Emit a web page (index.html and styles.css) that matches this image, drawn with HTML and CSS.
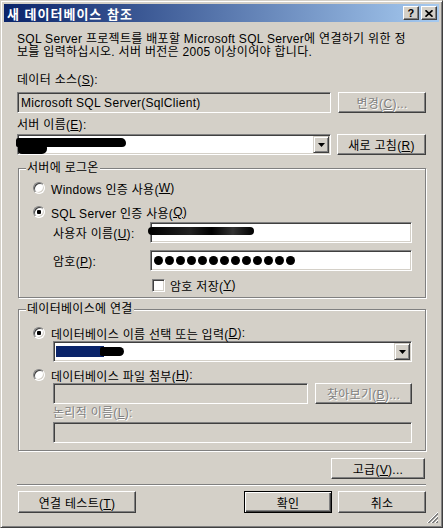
FILE: index.html
```html
<!DOCTYPE html>
<html lang="ko">
<head>
  <meta charset="UTF-8">
  <title>새 데이터베이스 참조</title>
  <link rel="stylesheet" href="styles.css">
</head>
<body>

<div class="window">
  <div class="titlebar">
    <span class="title">새 데이터베이스 참조</span>
    <div class="caption-btns">
      <button class="cap-btn">?</button>
      <button class="cap-btn">
        <svg width="8" height="7" viewBox="0 0 8 7"><path d="M0.5 0.3l7 6.4M7.5 0.3l-7 6.4" stroke="#000" stroke-width="1.7"/></svg>
      </button>
    </div>
  </div>

  <div class="content">
    <p class="desc">SQL Server 프로젝트를 배포할 Microsoft SQL Server에 연결하기 위한 정<br>보를 입력하십시오. 서버 버전은 2005 이상이어야 합니다.</p>

    <div class="label lbl-source">데이터 소스(<u>S</u>):</div>
    <div class="row row-source">
      <div class="field readonly src-field">Microsoft SQL Server(SqlClient)</div>
      <button class="btn disabled btn-change">변경(<u>C</u>)...</button>
    </div>

    <div class="label lbl-server">서버 이름(<u>E</u>):</div>
    <div class="row row-server">
      <div class="combo server-combo">
        <div class="combo-text"><span class="scribble scr-server"></span></div>
        <div class="drop-btn"><svg width="7" height="4" viewBox="0 0 7 4"><path d="M0 0h7L3.5 4z"/></svg></div>
      </div>
      <button class="btn btn-refresh">새로 고침(<u>R</u>)</button>
    </div>

    <fieldset class="group group-logon">
      <legend>서버에 로그온</legend>
      <div class="group-body">
        <div class="opt opt-win"><span class="radio"></span>Windows 인증 사용(<u>W</u>)</div>
        <div class="opt opt-sql"><span class="radio checked"></span>SQL Server 인증 사용(<u>Q</u>)</div>
        <div class="cred-row user-row">
          <span class="cred-label">사용자 이름(<u>U</u>):</span>
          <div class="field cred-field"><span class="scribble scr-user"></span></div>
        </div>
        <div class="cred-row pwd-row">
          <span class="cred-label">암호(<u>P</u>):</span>
          <div class="field cred-field" id="pwd"></div>
        </div>
        <div class="save-row"><span class="checkbox"></span>암호 저장(<u>Y</u>)</div>
      </div>
    </fieldset>

    <fieldset class="group group-db">
      <legend>데이터베이스에 연결</legend>
      <div class="group-body">
        <div class="opt opt-dbname"><span class="radio checked"></span>데이터베이스 이름 선택 또는 입력(<u>D</u>):</div>
        <div class="combo db-combo">
          <div class="combo-text"><span class="selected-text"></span><span class="scribble scr-db"></span></div>
          <div class="drop-btn"><svg width="7" height="4" viewBox="0 0 7 4"><path d="M0 0h7L3.5 4z"/></svg></div>
        </div>
        <div class="opt opt-file"><span class="radio"></span>데이터베이스 파일 첨부(<u>H</u>):</div>
        <div class="file-row">
          <div class="field readonly file-field"></div>
          <button class="btn disabled btn-browse">찾아보기(<u>B</u>)...</button>
        </div>
        <div class="label disabled-text lbl-logical">논리적 이름(<u>L</u>):</div>
        <div class="field readonly logical-field"></div>
      </div>
    </fieldset>

    <div class="advanced-row">
      <button class="btn btn-advanced">고급(<u>V</u>)...</button>
    </div>

    <div class="separator"></div>

    <div class="bottom-row">
      <button class="btn btn-test">연결 테스트(<u>T</u>)</button>
      <button class="btn default btn-ok">확인</button>
      <button class="btn btn-cancel">취소</button>
    </div>
  </div>

  <svg class="grip" width="12" height="12" viewBox="0 0 12 12" shape-rendering="crispEdges">
    <path d="M11 0L0 11" stroke="#fff"/><path d="M11 1L1 11M11 2L2 11" stroke="#808080"/>
    <path d="M11 4L4 11" stroke="#fff"/><path d="M11 5L5 11M11 6L6 11" stroke="#808080"/>
    <path d="M11 8L8 11" stroke="#fff"/><path d="M11 9L9 11M11 10L10 11" stroke="#808080"/>
  </svg>
</div>

<script>
  const pwd = document.getElementById("pwd");
  for (let i = 0; i < 13; i++) {
    const dot = document.createElement("span");
    dot.className = "pwd-dot";
    pwd.appendChild(dot);
  }
</script>

</body>
</html>
```

FILE: styles.css
```css
body {
  margin: 0;
  background: #d4d0c8;
  font-family: "Liberation Sans", "Noto Sans CJK KR", sans-serif;
  font-size: 12px;
  letter-spacing: 0.3px;
  color: #000;
}
button {
  font: inherit;
  letter-spacing: inherit;
  color: #000;
}
u {
  text-decoration: underline;
  text-underline-offset: 1px;
}
.window {
  position: relative;
  width: 443px;
  height: 528px;
  box-sizing: border-box;
  background: #d4d0c8;
  border: 1px solid;
  border-color: #d4d0c8 #404040 #404040 #d4d0c8;
  box-shadow: inset 1px 1px #fff, inset -1px -1px #808080;
  padding: 3px;
}
.titlebar {
  height: 18px;
  display: flex;
  align-items: center;
  justify-content: space-between;
  padding: 0 2px 0 3px;
  background: linear-gradient(to right, #0a246a, #a6caf0);
}
.title {
  color: #fff;
  font-weight: bold;
  font-size: 13px;
  letter-spacing: 1px;
}
.caption-btns {
  display: flex;
  gap: 2px;
}
.cap-btn {
  width: 16px;
  height: 14px;
  padding: 0;
  box-sizing: border-box;
  display: flex;
  align-items: center;
  justify-content: center;
  background: #d4d0c8;
  border: 1px solid;
  border-color: #fff #404040 #404040 #fff;
  box-shadow: inset -1px -1px #808080, inset 1px 1px #d4d0c8;
  font: bold 11px "Liberation Sans", sans-serif;
  line-height: 12px;
}
.content {
  padding: 11px 13px 0;
}
.desc {
  margin: 0;
  line-height: 13px;
  white-space: nowrap;
}
.label {
  height: 13px;
  line-height: 13px;
  white-space: nowrap;
}
.lbl-source { margin-top: 15px; }
.lbl-server { margin-top: 6px; }
.row {
  display: flex;
  justify-content: space-between;
}
.row-source { margin-top: 5px; }
.row-server { margin-top: 2px; }

.field {
  box-sizing: border-box;
  height: 21px;
  display: flex;
  align-items: center;
  padding: 0 3px;
  background: #fff;
  border: 1px solid;
  border-color: #808080 #fff #fff #808080;
  box-shadow: inset 1px 1px #404040, inset -1px -1px #d4d0c8;
  white-space: nowrap;
}
.field.readonly {
  background: #d4d0c8;
}
.src-field {
  width: 314px;
}
.btn {
  box-sizing: border-box;
  height: 21px;
  padding: 0;
  background: #d4d0c8;
  border: 1px solid;
  border-color: #fff #404040 #404040 #fff;
  box-shadow: inset -1px -1px #808080, inset 1px 1px #d4d0c8;
  white-space: nowrap;
}
.btn.default {
  border-color: #000;
  box-shadow: inset 1px 1px #fff, inset -1px -1px #404040, inset -2px -2px #808080;
}
.btn.disabled,
.disabled-text {
  color: #808080;
  text-shadow: 1px 1px #fff;
}
.btn-change { width: 88px; }
.btn-refresh { width: 89px; }

.combo {
  box-sizing: border-box;
  height: 21px;
  display: flex;
  padding: 1px;
  background: #fff;
  border: 1px solid;
  border-color: #808080 #fff #fff #808080;
  box-shadow: inset 1px 1px #404040, inset -1px -1px #d4d0c8;
}
.server-combo { width: 314px; }
.combo-text {
  flex: 1;
  display: flex;
  align-items: center;
}
.drop-btn {
  width: 16px;
  box-sizing: border-box;
  display: flex;
  align-items: center;
  justify-content: center;
  background: #d4d0c8;
  border: 1px solid;
  border-color: #d4d0c8 #404040 #404040 #d4d0c8;
  box-shadow: inset 1px 1px #fff, inset -1px -1px #808080;
}

.scribble {
  display: inline-block;
  position: relative;
  background: #000;
}
.scr-server {
  width: 110px;
  height: 9px;
  margin: -5px 0 0 -3px;
  border-radius: 3px 6px 5px 2px;
}
.scr-server::after {
  content: "";
  position: absolute;
  left: 2px;
  top: 7px;
  width: 29px;
  height: 9px;
  background: #000;
  border-radius: 2px 3px 5px 4px;
}
.scr-user {
  width: 106px;
  height: 8px;
  margin-left: -6px;
  margin-top: -3px;
  border-radius: 4px;
  background: linear-gradient(to right, #000 0, #222 40%, #000 60%, #333 80%, #000 100%);
}
.selected-text {
  display: inline-block;
  width: 48px;
  height: 11px;
  margin-left: 1px;
  background: #0a246a;
}
.scr-db {
  width: 24px;
  height: 9px;
  margin-left: -4px;
  border-radius: 2px 5px 5px 2px;
}

.group {
  margin: 7px 0 0 1px;
  padding: 0;
  min-width: 0;
  border: 1px solid #808080;
  box-shadow: inset 1px 1px #fff, 1px 1px #fff;
}
.group legend {
  margin-left: 7px;
  padding: 0 1px;
  line-height: 13px;
  background: #d4d0c8;
}
.group-body {
  padding: 0 13px 5px 14px;
}
.opt {
  display: flex;
  align-items: center;
  height: 16px;
  white-space: nowrap;
}
.radio {
  position: relative;
  box-sizing: border-box;
  width: 12px;
  height: 12px;
  margin-right: 6px;
  border-radius: 50%;
  background: #fff;
  border: 1px solid;
  border-color: #808080 #fff #fff #808080;
  box-shadow: inset 1px 1px #404040, inset -1px -1px #d4d0c8;
}
.radio.checked::after {
  content: "";
  position: absolute;
  left: 3px;
  top: 3px;
  width: 4px;
  height: 4px;
  border-radius: 1px;
  background: #000;
}
.opt-win { margin-top: 5px; }
.opt-sql { margin-top: 8px; }
.cred-row {
  display: flex;
  align-items: center;
  padding-left: 20px;
}
.user-row { margin-top: 2px; }
.pwd-row { margin-top: 7px; }
.cred-label {
  width: 97px;
  white-space: nowrap;
}
.cred-field {
  flex: 1;
  gap: 2px;
  padding-left: 3px;
}
.pwd-dot {
  width: 9px;
  height: 9px;
  border-radius: 50%;
  background: #000;
}
.save-row {
  display: flex;
  align-items: center;
  height: 14px;
  margin-top: 7px;
  padding-left: 119px;
  white-space: nowrap;
}
.checkbox {
  box-sizing: border-box;
  width: 13px;
  height: 13px;
  margin-right: 5px;
  background: #fff;
  border: 1px solid;
  border-color: #808080 #fff #fff #808080;
  box-shadow: inset 1px 1px #404040, inset -1px -1px #d4d0c8;
}

.group-db {
  margin-top: 5px;
}
.group-db .group-body {
  padding-bottom: 7px;
}
.opt-dbname {
  height: 14px;
  margin-top: 10px;
}
.db-combo {
  margin: 1px 0 0 20px;
}
.opt-file {
  height: 14px;
  margin-top: 6px;
}
.file-row {
  display: flex;
  gap: 7px;
  margin: 1px 0 0 20px;
}
.file-field { width: 255px; }
.btn-browse { width: 97px; }
.lbl-logical {
  margin: 3px 0 0 20px;
}
.logical-field {
  margin: 2px 0 0 20px;
}

.advanced-row {
  display: flex;
  justify-content: flex-end;
  margin-top: 7px;
  padding-right: 1px;
}
.btn-advanced { width: 94px; }
.separator {
  margin-top: 5px;
  border-top: 1px solid #808080;
  border-bottom: 1px solid #fff;
}
.bottom-row {
  display: flex;
  margin-top: 5px;
}
.bottom-row .btn {
  height: 22px;
}
.btn-test {
  width: 118px;
  margin-left: 1px;
}
.btn-ok {
  width: 88px;
  margin-left: auto;
}
.btn-cancel {
  width: 88px;
  margin-left: 6px;
}
.grip {
  position: absolute;
  right: 3px;
  bottom: 3px;
}
```
